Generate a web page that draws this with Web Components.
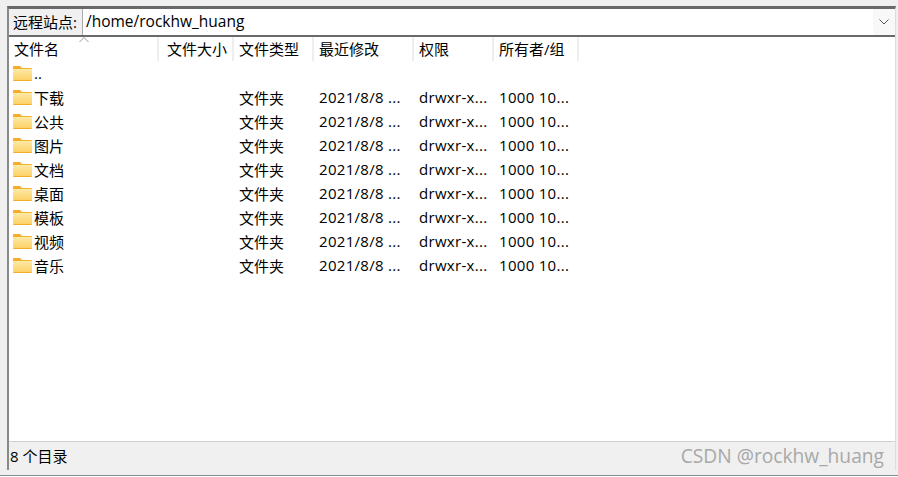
<!DOCTYPE html>
<html>
<head>
<meta charset="utf-8">
<title>remote</title>
<style>
  html, body { margin: 0; height: 100%; background: #fff; overflow: hidden; }
  body { font: 15px "Open Sans", "Noto Sans CJK SC", sans-serif; color: #000; }
</style>
</head>
<body>
<remote-pane>
  <site-bar path="/home/rockhw_huang"></site-bar>
  <file-list></file-list>
  <status-bar>8 个目录</status-bar>
</remote-pane>

<script>
const columns = [
  {title: '文件名', width: 150},
  {title: '文件大小', width: 75, right: true},
  {title: '文件类型', width: 80},
  {title: '最近修改', width: 100},
  {title: '权限', width: 80},
  {title: '所有者/组', width: 85},
];

const folderNames = ['下载', '公共', '图片', '文档', '桌面', '模板', '视频', '音乐'];

const folderIcon = `
  <svg width="19" height="15" viewBox="0 0 19 15">
    <defs>
      <linearGradient id="body" x1="0" y1="0" x2="0" y2="1">
        <stop offset="0" stop-color="#fee9a6"/>
        <stop offset="1" stop-color="#fcd268"/>
      </linearGradient>
    </defs>
    <path d="M0 1Q0 0 1 0H7L9 2H18Q19 2 19 3V14Q19 15 18 15H1Q0 15 0 14Z" fill="#f3ae2c"/>
    <rect x="0" y="3" width="19" height="11" fill="url(#body)"/>
  </svg>`;

class RemotePane extends HTMLElement {
  connectedCallback() {
    this.attachShadow({mode: 'open'});
    this.shadowRoot.innerHTML = `
      <style>
        :host {
          display: flex;
          flex-direction: column;
          box-sizing: border-box;
          height: 477px;
          padding-top: 6px;
          background: #f0f0f0;
        }
        .frame {
          flex: 1;
          display: flex;
          flex-direction: column;
          min-height: 0;
          margin: 0 2px 5px 7px;
          border-top: 3px solid #696969;
          border-left: 2px solid #8a8a8a;
          border-right: 1px solid #dcdcdc;
          background: #fff;
        }
        .edge { flex: none; height: 1px; background: #858c94; }
        .tail { flex: none; height: 1px; background: #fff; }
      </style>
      <div class="frame"><slot></slot></div>
      <div class="edge"></div>
      <div class="tail"></div>
    `;
  }
}
customElements.define('remote-pane', RemotePane);

class SiteBar extends HTMLElement {
  connectedCallback() {
    this.attachShadow({mode: 'open'});
    this.shadowRoot.innerHTML = `
      <style>
        :host {
          display: flex;
          flex: none;
          height: 26px;
          border-bottom: 2px solid #696969;
          align-items: stretch;
          background: #fff;
        }
        .label {
          width: 74px;
          display: flex;
          align-items: center;
          padding: 0 0 2px 4px;
          box-sizing: border-box;
          background: #f0f0f0;
          border-right: 1px solid #aaa;
          white-space: nowrap;
        }
        .path {
          flex: 1;
          display: flex;
          align-items: center;
          padding: 0 0 2px 3px;
          font-size: 15.5px;
        }
        .drop {
          width: 22px;
          display: flex;
          align-items: center;
          justify-content: center;
          background: #f8f8f8;
        }
      </style>
      <div class="label">远程站点:</div>
      <div class="path">${this.getAttribute('path')}</div>
      <div class="drop">
        <svg width="10" height="6" viewBox="0 0 10 6"><path d="M.5 .5L5 5L9.5 .5" fill="none" stroke="#555"/></svg>
      </div>
    `;
  }
}
customElements.define('site-bar', SiteBar);

class FileList extends HTMLElement {
  connectedCallback() {
    this.attachShadow({mode: 'open'});
    const head = columns.map(c =>
      `<div class="th${c.right ? ' right' : ''}" style="width:${c.width}px">${c.title}</div>`).join('');
    const row = (name, isFolder) => `
      <div class="row">
        <div class="cell name" style="width:${columns[0].width}px">${folderIcon}<span>${name}</span></div>
        <div class="cell" style="width:${columns[1].width}px"></div>
        ${isFolder ? `
        <div class="cell" style="width:${columns[2].width}px">文件夹</div>
        <div class="cell num" style="width:${columns[3].width}px">2021/8/8 ...</div>
        <div class="cell num" style="width:${columns[4].width}px">drwxr-x...</div>
        <div class="cell num" style="width:${columns[5].width}px">1000 10...</div>` : ''}
      </div>`;
    this.shadowRoot.innerHTML = `
      <style>
        :host { display: block; flex: 1; min-height: 0; position: relative; background: #fff; }
        .head { display: flex; height: 24px; margin-bottom: 2px; }
        .th {
          box-sizing: border-box;
          padding: 0 0 2px 5px;
          border-right: 2px solid #eee;
          display: flex;
          align-items: center;
          white-space: nowrap;
        }
        .th.right { justify-content: flex-end; padding-right: 5px; }
        .sort { position: absolute; left: 70px; top: 0; }
        .rows { margin-top: -2px; }
        .row { display: flex; height: 24px; align-items: center; }
        .cell {
          box-sizing: border-box;
          padding-left: 5px;
          white-space: nowrap;
          display: flex;
          align-items: center;
        }
        .num { letter-spacing: .3px; }
        .name { padding-left: 4px; gap: 2px; }
        svg { flex: none; }
      </style>
      <div class="head">${head}</div>
      <svg class="sort" width="10" height="6" viewBox="0 0 10 6"><path d="M.5 5L5 .5L9.5 5" fill="none" stroke="#999"/></svg>
      <div class="rows">
        ${row('..', false)}
        ${folderNames.map(n => row(n, true)).join('')}
      </div>
    `;
  }
}
customElements.define('file-list', FileList);

class StatusBar extends HTMLElement {
  connectedCallback() {
    this.attachShadow({mode: 'open'});
    this.shadowRoot.innerHTML = `
      <style>
        :host {
          display: flex;
          flex: none;
          height: 29px;
          box-sizing: border-box;
          align-items: center;
          justify-content: space-between;
          padding: 0 11px 2px 1px;
          background: #f0f0f0;
          border-top: 1px solid #d0d0d0;
        }
        .mark { font-size: 19.2px; color: #a8a8a8; }
      </style>
      <span><slot></slot></span>
      <span class="mark">CSDN @rockhw_huang</span>
    `;
  }
}
customElements.define('status-bar', StatusBar);
</script>
</body>
</html>
